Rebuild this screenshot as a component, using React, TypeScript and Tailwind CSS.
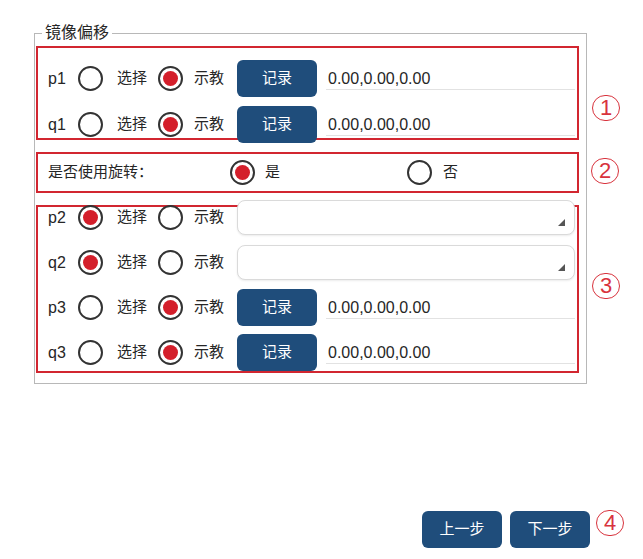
import React from "react";

const FONT = { fontFamily: '"Liberation Sans", "Noto Sans CJK SC", sans-serif' };

function Radio({ checked }: { checked?: boolean }) {
  return (
    <span className="flex h-[25px] w-[25px] shrink-0 items-center justify-center rounded-full border-2 border-[#333] bg-white">
      {checked && <span className="h-[15px] w-[15px] rounded-full bg-[#d41f2b]" />}
    </span>
  );
}

function NavButton({ children, className = "" }: { children: React.ReactNode; className?: string }) {
  return (
    <button className={"flex h-[37px] w-[80px] shrink-0 items-center justify-center rounded-[6px] bg-[#1f4d7b] text-[15px] text-white " + className}>
      {children}
    </button>
  );
}

function Circled({ n, className = "" }: { n: string; className?: string }) {
  return (
    <span className={"flex h-[26px] w-[28px] items-center justify-center rounded-full border border-[#d8333d] text-[22px] leading-none text-[#d8333d] " + className}>
      {n}
    </span>
  );
}

function Row({ label, select, kind }: { label: string; select: boolean; kind: "record" | "dropdown" }) {
  return (
    <div className="flex h-[37px] items-center pl-[10px]">
      <span className="w-[30px] text-[16px] text-[#262626]">{label}</span>
      <Radio checked={select} />
      <span className="ml-[14px] w-[30px] text-[15px] text-[#262626]">选择</span>
      <span className="ml-[11px]">
        <Radio checked={!select} />
      </span>
      <span className="ml-[11px] w-[32px] text-[15px] text-[#262626]">示教</span>
      {kind === "record" ? (
        <>
          <NavButton className="ml-[11px]">记录</NavButton>
          <div className="ml-[9px] mr-[2px] h-[22px] flex-1 border-b border-[#e2e2e2] pl-[2px] text-[16px] leading-[22px] text-[#262626]">
            0.00,0.00,0.00
          </div>
        </>
      ) : (
        <div className="ml-[11px] mr-[2px] flex h-[35px] flex-1 items-end justify-end rounded-[8px] border border-[#dadada] bg-white pb-[8px] pr-[9px] shadow-[0_1px_2px_rgba(0,0,0,0.08)]">
          <svg width="7" height="7" viewBox="0 0 7 7">
            <polygon points="7,0 7,7 0,7" fill="#555" />
          </svg>
        </div>
      )}
    </div>
  );
}

export default function App() {
  return (
    <div className="relative flex h-[559px] w-[643px] flex-col bg-white" style={FONT}>
      <fieldset className="ml-[34px] mt-[22px] w-[553px] border border-[#b8b8b8] pb-[10px]">
        <legend className="ml-[7px] px-[3px] text-[16px] leading-[22px] text-[#262626]">镜像偏移</legend>
        <div className="ml-[1px] mt-[2px] h-[94px] w-[543px] border-2 border-[#d22630] pt-[12px]">
          <div className="flex flex-col gap-[9px]">
            <Row label="p1" select={false} kind="record" />
            <Row label="q1" select={false} kind="record" />
          </div>
        </div>
        <div className="ml-[1px] mt-[12px] flex h-[41px] w-[543px] items-center border-2 border-[#d22630] pl-[10px] text-[15px] text-[#262626]">
          <span className="w-[182px]">是否使用旋转：</span>
          <span className="flex w-[177px] items-center">
            <Radio checked />
            <span className="ml-[10px]">是</span>
          </span>
          <span className="flex items-center">
            <Radio />
            <span className="ml-[11px]">否</span>
          </span>
        </div>
        <div className="ml-[1px] mt-[12px] h-[168px] w-[543px] border-2 border-[#d22630]">
          <div className="-mt-[8px] flex flex-col gap-[8px]">
            <Row label="p2" select kind="dropdown" />
            <Row label="q2" select kind="dropdown" />
            <Row label="p3" select={false} kind="record" />
            <Row label="q3" select={false} kind="record" />
          </div>
        </div>
      </fieldset>

      <div className="mt-[127px] flex items-start justify-end pr-[19px]">
        <NavButton>上一步</NavButton>
        <NavButton className="ml-[8px]">下一步</NavButton>
        <Circled n="4" className="-mt-[1px] ml-[6px]" />
      </div>

      <Circled n="1" className="absolute left-[592px] top-[95px]" />
      <Circled n="2" className="absolute left-[591px] top-[158px]" />
      <Circled n="3" className="absolute left-[592px] top-[273px]" />
    </div>
  );
}
